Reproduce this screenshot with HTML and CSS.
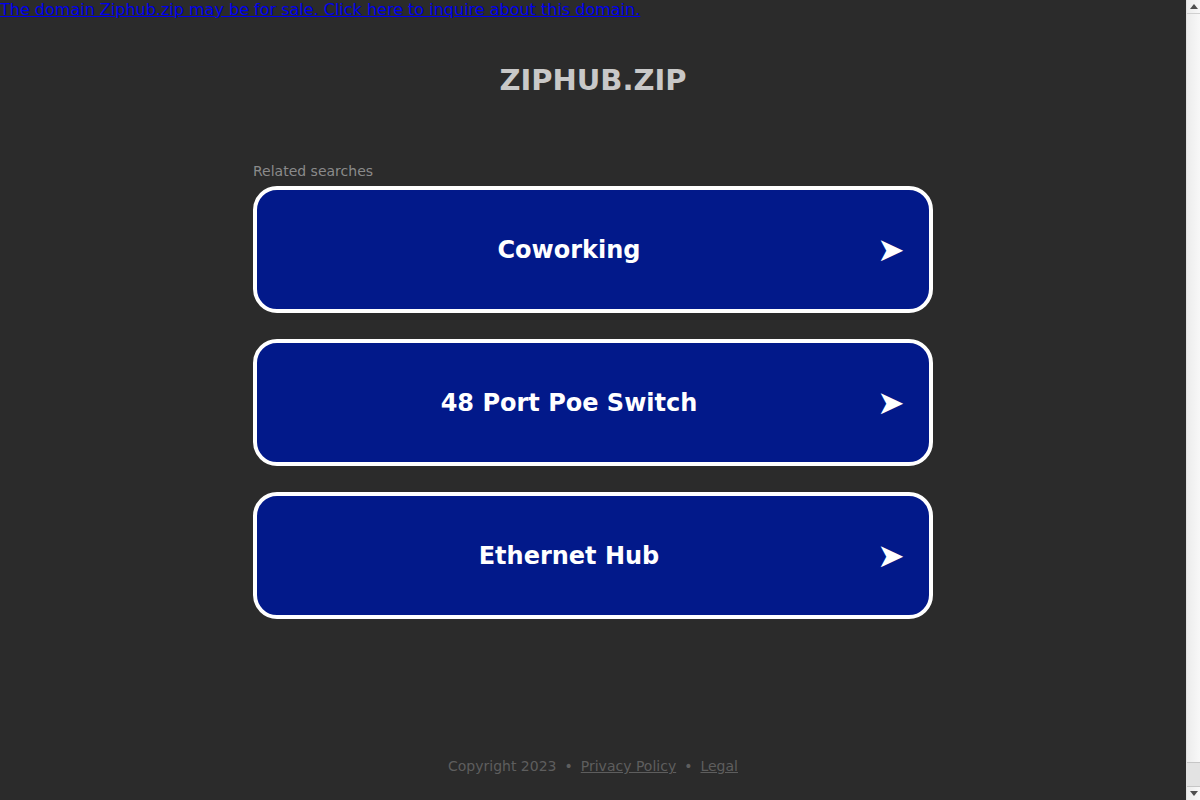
FILE: index.html
```html
<!DOCTYPE html>
<html lang="en">
<head>
<meta charset="utf-8">
<title>ziphub.zip</title>
<link rel="stylesheet" href="styles.css">
</head>
<body>
<a class="sale" href="#">The domain Ziphub.zip may be for sale. Click here to inquire about this domain.</a>
<h1 class="domain">ZIPHUB.ZIP</h1>
<main class="searches">
  <p class="searches-label">Related searches</p>
  <a class="card" href="#"><span class="card-text">Coworking</span><span class="card-arrow">➤</span></a>
  <a class="card" href="#"><span class="card-text">48 Port Poe Switch</span><span class="card-arrow">➤</span></a>
  <a class="card" href="#"><span class="card-text">Ethernet Hub</span><span class="card-arrow">➤</span></a>
</main>
<footer class="footer">
  <span>Copyright 2023</span><span class="dot">•</span><a href="#">Privacy Policy</a><span class="dot">•</span><a href="#">Legal</a>
</footer>
<div class="scrollbar" aria-hidden="true">
  <span class="sb-up"></span>
  <span class="sb-track"><span class="sb-thumb"></span></span>
  <span class="sb-down"></span>
</div>
</body>
</html>
```
FILE: styles.css
```css
html {
  background: #2b2b2b;
}
body {
  margin: 0;
  padding-right: 14px;
  background: #2b2b2b;
  font-family: "DejaVu Sans", sans-serif;
}
.sale {
  display: block;
  font-size: 16px;
  line-height: 19px;
  color: #0000ee;
  text-decoration: underline;
  white-space: nowrap;
}
.domain {
  margin: 45px 0 0;
  text-align: center;
  font-size: 29px;
  line-height: 33px;
  font-weight: bold;
  color: #c8c8c8;
}
.searches {
  width: 680px;
  margin: 66px auto 0;
  display: flex;
  flex-direction: column;
  gap: 26px;
}
.searches-label {
  margin: 0 0 -19px;
  font-size: 14px;
  line-height: 16px;
  color: #8a8a8a;
}
.card {
  box-sizing: border-box;
  height: 127px;
  display: flex;
  align-items: center;
  border: 4px solid #fff;
  border-radius: 24px;
  background: #02198a;
  color: #fff;
  text-decoration: none;
}
.card-text {
  flex: 1;
  text-align: center;
  font-size: 24px;
  font-weight: bold;
}
.card-arrow {
  width: 48px;
  margin-left: -4px;
  margin-right: 4px;
  font-size: 33px;
  line-height: 1;
}
.footer {
  margin-top: 139px;
  text-align: center;
  font-size: 14px;
  line-height: 16px;
  color: #5e5e5e;
}
.footer a {
  color: #5e5e5e;
  text-decoration: underline;
}
.dot {
  margin: 0 8px;
}
.scrollbar {
  position: fixed;
  top: 0;
  right: 0;
  bottom: 0;
  width: 14px;
  display: flex;
  flex-direction: column;
  background: linear-gradient(to right, #ececec, #f8f8f8);
  border-left: 1px solid #e2e2e2;
  box-sizing: border-box;
}
.sb-up,
.sb-down {
  height: 13px;
  flex: none;
  display: flex;
  align-items: center;
  justify-content: center;
}
.sb-up::before {
  content: "";
  border-left: 4px solid transparent;
  border-right: 4px solid transparent;
  border-bottom: 5px solid #505050;
}
.sb-down::before {
  content: "";
  border-left: 4px solid transparent;
  border-right: 4px solid transparent;
  border-top: 5px solid #505050;
}
.sb-up {
  border-bottom: 1px solid #d0d0d0;
}
.sb-track {
  flex: 1;
  display: flex;
  flex-direction: column;
  justify-content: flex-end;
}
.sb-thumb {
  height: 23px;
  background: #e3e3e3;
  border-top: 1px solid #c6c6c6;
  border-bottom: 1px solid #c6c6c6;
}
```
